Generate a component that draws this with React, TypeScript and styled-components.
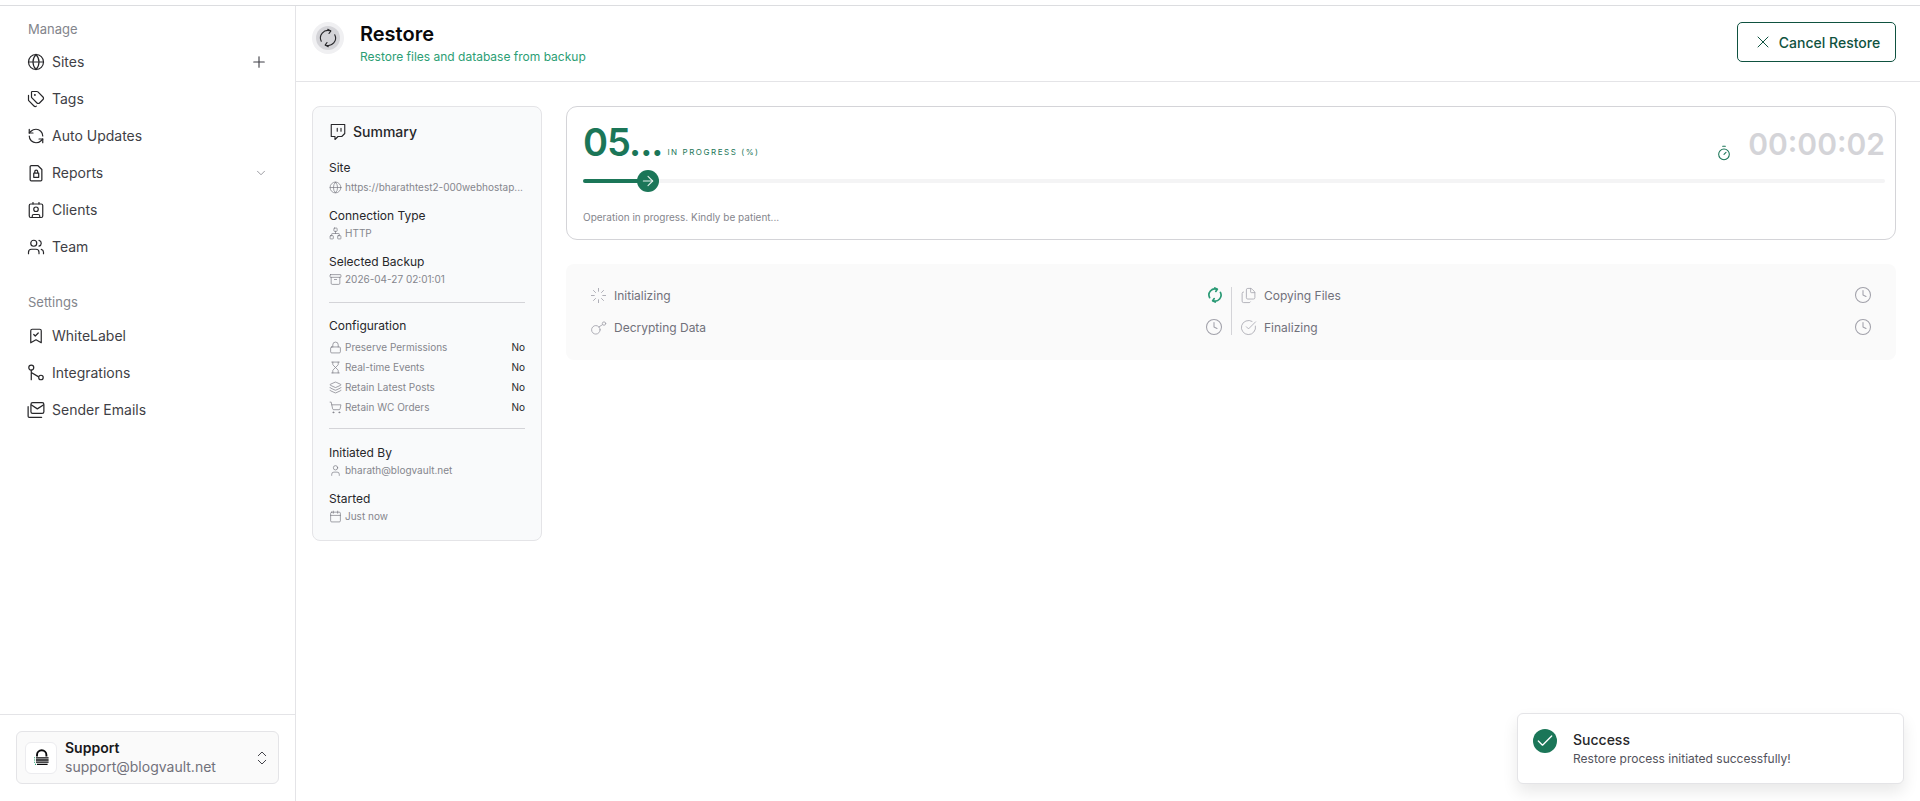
import React from "react";
import styled, { createGlobalStyle } from "styled-components";
import {
  Globe, Plus, Tags, RefreshCcw, ChevronDown, Contact, Users, BookmarkCheck,
  ChevronsUpDown, X, Twitch, Network, Archive, Lock, Hourglass, Layers, ShoppingCart, User, Calendar,
  ArrowRight, Timer, Loader, Files, CircleCheckBig, Clock, Check,
} from "lucide-react";

const Global = createGlobalStyle`
  html, body { margin: 0; padding: 0; height: 100%; background: #fff; }
  body { font-family: Inter, "Liberation Sans", sans-serif; color: #18181b; }
  * { box-sizing: border-box; }
`;

const Page = styled.div`
  width: 1920px; height: 801px; overflow: hidden; display: flex; flex-direction: column; position: relative;
`;
const TopStrip = styled.div`height: 6px; flex: none; border-bottom: 1px solid #dcdde0;`;
const Body = styled.div`flex: 1; display: flex; min-height: 0;`;

const Sidebar = styled.aside`
  width: 296px; flex: none; border-right: 1px solid #e4e4e7; display: flex; flex-direction: column;
`;
const SideNav = styled.nav`flex: 1; padding: 14px 27px 0 28px;`;
const SectionLabel = styled.div`
  font-size: 13px; line-height: 18px; color: #83858c; margin-bottom: 5px;
  &:not(:first-child) { margin-top: 28px; margin-bottom: 6px; }
`;
const NavRow = styled.div`
  height: 37px; display: flex; align-items: center; gap: 8px; font-size: 14px; color: #3f3f46;
`;
const NavIcon = styled.span`
  width: 16px; height: 16px; display: flex; align-items: center; justify-content: center; color: #27272a; flex: none;
  svg { flex: none; }
`;
const NavText = styled.span`flex: 1;`;
const SideFoot = styled.div`height: 87px; flex: none; border-top: 1px solid #e4e4e7; padding: 16px;`;
const Account = styled.div`
  height: 53px; border: 1px solid #e4e4e7; border-radius: 6px; background: #fafafa;
  display: flex; align-items: center; padding: 0 7px 0 8px; gap: 8px;
`;
const LogoBox = styled.div`
  width: 32px; height: 32px; border: 1px solid #ececef; border-radius: 6px; background: #fff;
  display: flex; align-items: center; justify-content: center; flex: none;
`;
const AccountText = styled.div`flex: 1; min-width: 0; margin-top: -1px;`;
const AccountName = styled.div`font-size: 14px; line-height: 18px; font-weight: 600; color: #18181b;`;
const AccountMail = styled.div`font-size: 14px; line-height: 19px; color: #71717a;`;

const Main = styled.main`flex: 1; min-width: 0; display: flex; flex-direction: column;`;
const Header = styled.header`
  height: 76px; flex: none; border-bottom: 1px solid #e4e4e7; padding: 16px 24px 0 16px;
  display: flex; align-items: flex-start;
`;
const HeadIcon = styled.div`
  width: 32px; height: 32px; border-radius: 50%; background: #f0f0f2; display: flex; align-items: center; justify-content: center;
  flex: none; margin-right: 16px;
`;
const HeadInner = styled.div`
  width: 24px; height: 24px; border-radius: 50%; background: #d4d4d8; display: flex; align-items: center; justify-content: center; color: #27272a;
`;
const HeadText = styled.div`flex: 1;`;
const Title = styled.h1`margin: 0; font-size: 20px; line-height: 24px; font-weight: 600; color: #09090b;`;
const Subtitle = styled.p`margin: 0; font-size: 12px; line-height: 22px; color: #2c9e74;`;
const CancelButton = styled.button`
  height: 40px; width: 159px; border: 1px solid #0f5240; border-radius: 5px; background: #fff; color: #0f5240;
  font: 500 14px Inter, sans-serif; display: flex; align-items: center; justify-content: center; gap: 6px;
`;

const Content = styled.div`flex: 1; display: flex; gap: 24px; padding: 24px 24px 0 16px; align-items: flex-start;`;
const SummaryCard = styled.section`
  width: 230px; flex: none; height: 435px; background: #f9fafb; border: 1px solid #e4e4e7; border-radius: 8px; padding: 16px 16px 0;
`;
const SummaryHead = styled.div`
  display: flex; align-items: center; gap: 6px; font-size: 14px; line-height: 18px; font-weight: 500; color: #27272a; margin-bottom: 19px;
`;
const FieldBlock = styled.div`margin-bottom: 14px;`;
const FieldLabel = styled.div`font-size: 12px; line-height: 16px; color: #27272a;`;
const FieldValue = styled.div<{ $tall?: boolean }>`
  display: flex; align-items: center; gap: 3px; font-size: 10px; line-height: 14px; color: #85868d;
  margin-top: ${(p) => (p.$tall ? 4 : 2)}px;
  svg { flex: none; color: #71717a; }
`;
const Divider = styled.hr`margin: 0; border: 0; border-top: 1px solid #d4d4d8;`;
const ConfigBlock = styled.div`padding: 15px 0 11px;`;
const PeopleBlock = styled.div`padding: 16px 0 0;`;
const LastFieldBlock = styled(FieldBlock)`margin-bottom: 16px;`;
const ConfigRows = styled.div`margin-top: 3px;`;
const ConfigRow = styled.div`
  display: flex; align-items: center; gap: 3px; height: 20px; font-size: 10px; color: #85868d;
  svg { flex: none; color: #71717a; }
`;
const ConfigName = styled.span`flex: 1;`;
const ConfigVal = styled.span`color: #27272a; font-size: 10px;`;

const Right = styled.div`flex: 1; min-width: 0; display: flex; flex-direction: column; gap: 24px;`;
const ProgressCard = styled.section`
  height: 134px; border: 1px solid #d4d4d8; border-radius: 11px; padding: 17px 10px 0 16px;
`;
const ProgressTop = styled.div`display: flex; align-items: flex-end; height: 37px;`;
const Percent = styled.span`font-size: 38px; line-height: 37px; font-weight: 600; color: #1b7658; letter-spacing: -1px;`;
const PercentLabel = styled.span`
  font-size: 8px; letter-spacing: 1.55px; color: #1b7658; margin-left: 5px; margin-bottom: 4px; line-height: 10px; flex: 1;
`;
const TimerIcon = styled.span`color: #1b7658; display: flex; margin-right: 16px;`;
const TimerValue = styled.span`font-size: 30px; line-height: 37px; font-weight: 600; color: #d4d4d8; margin-bottom: -2px;`;
const Track = styled.div`position: relative; height: 4px; background: #f4f4f5; border-radius: 2px; margin-top: 18px;`;
const Fill = styled.div`height: 4px; background: #1b7658; border-radius: 2px;`;
const Thumb = styled.div`
  position: absolute; top: -9px; width: 22px; height: 22px; border-radius: 50%; background: #1b7658; color: #e4f1ec;
  display: flex; align-items: center; justify-content: center;
`;
const ProgressNote = styled.div`font-size: 10px; line-height: 14px; color: #85868d; margin-top: 27px;`;

const StepsCard = styled.section`
  height: 96px; background: #fafafa; border-radius: 8px; padding: 15px 24px 0 24px;
  display: grid; grid-template-columns: 1fr 1fr; grid-auto-rows: 32px;
`;
const StepRow = styled.div<{ $second?: boolean; $last?: boolean }>`
  display: flex; align-items: center; gap: 8px; font-size: 12px; color: #71717a; height: 32px; position: relative;
  padding-left: ${(p) => (p.$second ? "9px" : "0")};
  padding-right: ${(p) => (p.$second ? "0" : "8px")};
  &::before {
    content: "";
    display: ${(p) => (p.$second ? "block" : "none")};
    position: absolute; left: 0; width: 1px; background: #d4d4d8;
    top: ${(p) => (p.$last ? "0" : "8px")};
    bottom: ${(p) => (p.$last ? "8px" : "0")};
  }
`;
const StepIcon = styled.span`display: flex; color: #a1a1aa; width: 16px; justify-content: center; flex: none; svg { flex: none; }`;
const StepName = styled.span`flex: 1;`;
const StepStatus = styled.span<{ $active?: boolean }>`display: flex; color: ${(p) => (p.$active ? "#2a9a75" : "#a1a1aa")};`;

const Toast = styled.div`
  position: absolute; left: 1517px; top: 713px; width: 387px; height: 71px; background: #fff; border: 1px solid #e4e4e7; border-radius: 6px;
  box-shadow: 0 8px 16px rgba(0,0,0,.09); display: flex; align-items: flex-start; padding: 15px;
`;
const ToastBadge = styled.div`
  width: 24px; height: 24px; border-radius: 50%; background: #1b7658; color: #fff; display: flex; align-items: center; justify-content: center;
  flex: none; margin-right: 16px;
`;
const ToastTitle = styled.div`font-size: 14px; line-height: 18px; font-weight: 500; color: #27272a; margin-top: 2px;`;
const ToastText = styled.div`font-size: 12px; line-height: 19px; color: #52525b;`;

const s = 1.6;
const Svg16 = ({ children, w = 18 }: { children: React.ReactNode; w?: number }) => (
  <svg width={w} height={w} viewBox="0 0 16 16" fill="none" stroke="currentColor" strokeWidth="1.1" strokeLinecap="round" strokeLinejoin="round">
    {children}
  </svg>
);
const KeyIcon = () => (
  <Svg16 w={17}>
    <circle cx="5.5" cy="10.2" r="4" strokeWidth="0.8" />
    <path d="M8.5 7.4 L11.5 5.5" strokeWidth="0.8" />
    <circle cx="13.2" cy="4.3" r="1.6" strokeWidth="0.8" />
  </Svg16>
);
const MailStack = () => (
  <Svg16>
    <rect x="3.5" y="1.5" width="11.5" height="9.5" rx="1.5" />
    <path d="M4 3.5 L9.2 7 L14.5 3.5" />
    <path d="M1 5v8.5a1 1 0 0 0 1 1h11" />
  </Svg16>
);
const ReportIcon = () => (
  <Svg16>
    <path d="M2.8 2.5a1 1 0 0 1 1-1h6l3.4 3.4v9.1a1 1 0 0 1-1 1H3.8a1 1 0 0 1-1-1z" />
    <path d="M6 8.2h4.4v3.6H6zM6.9 8.2V6.8a1.3 1.3 0 0 1 2.6 0v1.4" />
  </Svg16>
);
const RouteIcon = () => (
  <Svg16>
    <circle cx="3.8" cy="3.2" r="2.2" />
    <path d="M3.8 5.5V14M3.8 7.5 10 11.2" />
    <circle cx="12.4" cy="12" r="2" />
  </Svg16>
);
const SyncIcon = ({ size, width }: { size: number; width: number }) => (
  <svg width={size} height={size} viewBox="0 0 16 16" fill="none" stroke="currentColor" strokeWidth={width} strokeLinecap="round" strokeLinejoin="round">
    <path d="M9.8 2.2A6 6 0 0 0 2.6 10.6" />
    <path d="M6.2 13.8A6 6 0 0 0 13.4 5.4" />
    <path d="M7.8 1 10.3 2.3 8.8 4.4" />
    <path d="M8.2 15 5.7 13.7 7.2 11.6" />
  </svg>
);
const Logo = () => (
  <svg width="15" height="17" viewBox="0 0 15 17" fill="none">
    <path d="M3 7.6V6a4.7 4.7 0 0 1 9.4 0v1.6" stroke="#09090b" strokeWidth="1.9" />
    <path d="M2 8.8h12.6M2 11h12.6M2 13.2h12.6M3 15.4h10.6" stroke="#09090b" strokeWidth="1.3" />
    <path d="M0 8.8h1.1M0 11h1.1M0 13.2h1.1M1 15.4h1.1" stroke="#2aa275" strokeWidth="1.1" />
  </svg>
);

type NavItem = { icon: React.ReactNode; label: string; end?: React.ReactNode };
const nav1: NavItem[] = [
  { icon: <Globe size={18} strokeWidth={s} />, label: "Sites", end: <Plus size={18} strokeWidth={1.5} /> },
  { icon: <Tags size={18} strokeWidth={s} />, label: "Tags" },
  { icon: <RefreshCcw size={18} strokeWidth={s} />, label: "Auto Updates" },
  { icon: <ReportIcon />, label: "Reports", end: <ChevronDown size={14} strokeWidth={1.2} color="#71717a" /> },
  { icon: <Contact size={18} strokeWidth={s} />, label: "Clients" },
  { icon: <Users size={18} strokeWidth={s} />, label: "Team" },
];
const nav2: NavItem[] = [
  { icon: <BookmarkCheck size={18} strokeWidth={s} />, label: "WhiteLabel" },
  { icon: <RouteIcon />, label: "Integrations" },
  { icon: <MailStack />, label: "Sender Emails" },
];
const m = 1.2;
const config = [
  { icon: <Lock size={13} strokeWidth={m} />, label: "Preserve Permissions" },
  { icon: <Hourglass size={13} strokeWidth={m} />, label: "Real-time Events" },
  { icon: <Layers size={13} strokeWidth={m} />, label: "Retain Latest Posts" },
  { icon: <ShoppingCart size={13} strokeWidth={m} />, label: "Retain WC Orders" },
];

const Nav = ({ items }: { items: NavItem[] }) => (
  <>
    {items.map((i) => (
      <NavRow key={i.label}>
        <NavIcon>{i.icon}</NavIcon>
        <NavText>{i.label}</NavText>
        {i.end}
      </NavRow>
    ))}
  </>
);

export default function App() {
  return (
    <Page>
      <Global />
      <TopStrip />
      <Body>
        <Sidebar>
          <SideNav>
            <SectionLabel>Manage</SectionLabel>
            <Nav items={nav1} />
            <SectionLabel>Settings</SectionLabel>
            <Nav items={nav2} />
          </SideNav>
          <SideFoot>
            <Account>
              <LogoBox><Logo /></LogoBox>
              <AccountText>
                <AccountName>Support</AccountName>
                <AccountMail>support@blogvault.net</AccountMail>
              </AccountText>
              <ChevronsUpDown size={18} strokeWidth={1.3} color="#3f3f46" />
            </Account>
          </SideFoot>
        </Sidebar>
        <Main>
          <Header>
            <HeadIcon><HeadInner><SyncIcon size={20} width={0.9} /></HeadInner></HeadIcon>
            <HeadText>
              <Title>Restore</Title>
              <Subtitle>Restore files and database from backup</Subtitle>
            </HeadText>
            <CancelButton><X size={20} strokeWidth={1.2} />Cancel Restore</CancelButton>
          </Header>
          <Content>
            <SummaryCard>
              <SummaryHead><Twitch size={18} strokeWidth={1.5} />Summary</SummaryHead>
              <FieldBlock>
                <FieldLabel>Site</FieldLabel>
                <FieldValue $tall><Globe size={13} strokeWidth={m} />https://bharathtest2-000webhostap...</FieldValue>
              </FieldBlock>
              <FieldBlock>
                <FieldLabel>Connection Type</FieldLabel>
                <FieldValue><Network size={13} strokeWidth={m} />HTTP</FieldValue>
              </FieldBlock>
              <LastFieldBlock>
                <FieldLabel>Selected Backup</FieldLabel>
                <FieldValue><Archive size={13} strokeWidth={m} />2026-04-27 02:01:01</FieldValue>
              </LastFieldBlock>
              <Divider />
              <ConfigBlock>
                <FieldLabel>Configuration</FieldLabel>
                <ConfigRows>
                  {config.map((c) => (
                    <ConfigRow key={c.label}>
                      {c.icon}
                      <ConfigName>{c.label}</ConfigName>
                      <ConfigVal>No</ConfigVal>
                    </ConfigRow>
                  ))}
                </ConfigRows>
              </ConfigBlock>
              <Divider />
              <PeopleBlock>
                <FieldBlock>
                  <FieldLabel>Initiated By</FieldLabel>
                  <FieldValue><User size={13} strokeWidth={m} />bharath@blogvault.net</FieldValue>
                </FieldBlock>
                <FieldLabel>Started</FieldLabel>
                <FieldValue><Calendar size={13} strokeWidth={m} />Just now</FieldValue>
              </PeopleBlock>
            </SummaryCard>
            <Right>
              <ProgressCard>
                <ProgressTop>
                  <Percent>05...</Percent>
                  <PercentLabel>IN PROGRESS (%)</PercentLabel>
                  <TimerIcon><Timer size={16} strokeWidth={1.6} /></TimerIcon>
                  <TimerValue>00:00:02</TimerValue>
                </ProgressTop>
                <Track>
                  <Fill style={{ width: "4.4%" }} />
                  <Thumb style={{ left: "4.14%" }}><ArrowRight size={16} strokeWidth={1.6} /></Thumb>
                </Track>
                <ProgressNote>Operation in progress. Kindly be patient...</ProgressNote>
              </ProgressCard>
              <StepsCard>
                <StepRow>
                  <StepIcon><Loader size={17} strokeWidth={1.2} /></StepIcon>
                  <StepName>Initializing</StepName>
                  <StepStatus $active><SyncIcon size={16} width={1.7} /></StepStatus>
                </StepRow>
                <StepRow $second>
                  <StepIcon><Files size={17} strokeWidth={1.1} /></StepIcon>
                  <StepName>Copying Files</StepName>
                  <StepStatus><Clock size={18} strokeWidth={1.4} /></StepStatus>
                </StepRow>
                <StepRow>
                  <StepIcon><KeyIcon /></StepIcon>
                  <StepName>Decrypting Data</StepName>
                  <StepStatus><Clock size={18} strokeWidth={1.4} /></StepStatus>
                </StepRow>
                <StepRow $second $last>
                  <StepIcon><CircleCheckBig size={17} strokeWidth={1.1} /></StepIcon>
                  <StepName>Finalizing</StepName>
                  <StepStatus><Clock size={18} strokeWidth={1.4} /></StepStatus>
                </StepRow>
              </StepsCard>
            </Right>
          </Content>
        </Main>
      </Body>
      <Toast>
        <ToastBadge><Check size={20} strokeWidth={1.6} /></ToastBadge>
        <div>
          <ToastTitle>Success</ToastTitle>
          <ToastText>Restore process initiated successfully!</ToastText>
        </div>
      </Toast>
    </Page>
  );
}
